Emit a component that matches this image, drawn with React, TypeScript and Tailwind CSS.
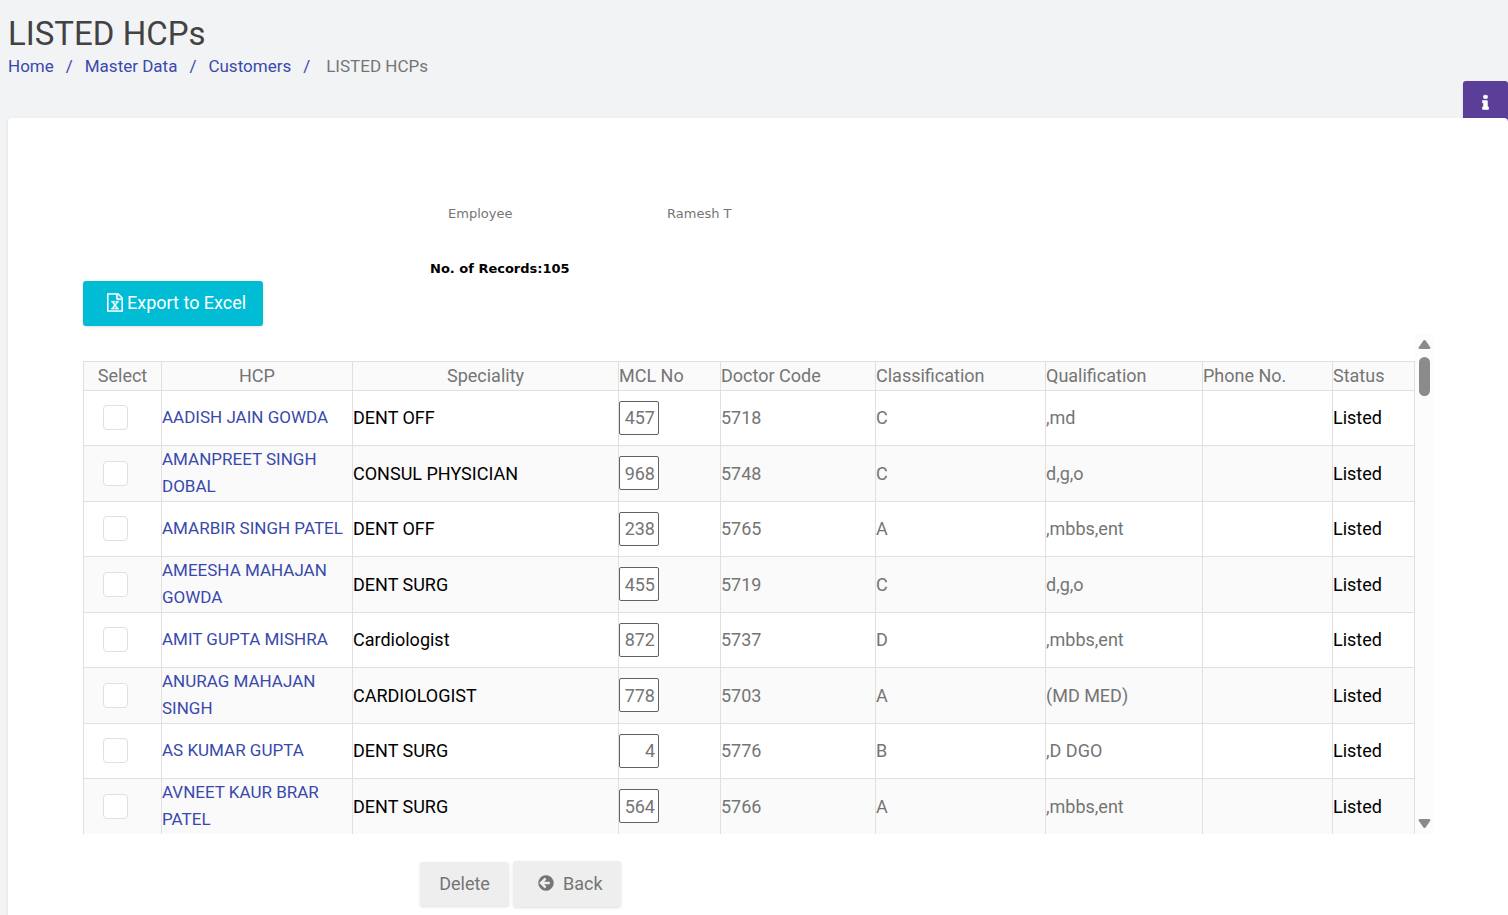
import { useState } from "react"

interface Hcp {
   name: string
   speciality: string
   mclNo: string
   code: string
   classification: string
   qualification: string
   phone: string
   status: string
}

const hcps: Hcp[] = [
   { name: "AADISH JAIN GOWDA", speciality: "DENT OFF", mclNo: "457", code: "5718", classification: "C", qualification: ",md", phone: "", status: "Listed" },
   { name: "AMANPREET SINGH DOBAL", speciality: "CONSUL PHYSICIAN", mclNo: "968", code: "5748", classification: "C", qualification: "d,g,o", phone: "", status: "Listed" },
   { name: "AMARBIR SINGH PATEL", speciality: "DENT OFF", mclNo: "238", code: "5765", classification: "A", qualification: ",mbbs,ent", phone: "", status: "Listed" },
   { name: "AMEESHA MAHAJAN GOWDA", speciality: "DENT SURG", mclNo: "455", code: "5719", classification: "C", qualification: "d,g,o", phone: "", status: "Listed" },
   { name: "AMIT GUPTA MISHRA", speciality: "Cardiologist", mclNo: "872", code: "5737", classification: "D", qualification: ",mbbs,ent", phone: "", status: "Listed" },
   { name: "ANURAG MAHAJAN SINGH", speciality: "CARDIOLOGIST", mclNo: "778", code: "5703", classification: "A", qualification: "(MD MED)", phone: "", status: "Listed" },
   { name: "AS KUMAR GUPTA", speciality: "DENT SURG", mclNo: "4", code: "5776", classification: "B", qualification: ",D DGO", phone: "", status: "Listed" },
   { name: "AVNEET KAUR BRAR PATEL", speciality: "DENT SURG", mclNo: "564", code: "5766", classification: "A", qualification: ",mbbs,ent", phone: "", status: "Listed" },
]

const crumbs = ["Home", "Master Data", "Customers"]

const InfoIcon = () => (
   <svg viewBox="0 0 640 1792" className="h-[18px] w-[7px]" fill="currentColor" stroke="currentColor" strokeWidth="60" aria-hidden="true">
      <path d="M640 1344v128q0 26-19 45t-45 19h-512q-26 0-45-19t-19-45v-128q0-26 19-45t45-19h64v-384h-64q-26 0-45-19t-19-45v-128q0-26 19-45t45-19h384q26 0 45 19t19 45v576h64q26 0 45 19t19 45zM512 192v192q0 26-19 45t-45 19h-256q-26 0-45-19t-19-45v-192q0-26 19-45t45-19h256q26 0 45 19t19 45z" />
   </svg>
)

const ExcelIcon = () => (
   <svg viewBox="0 0 1536 1792" className="h-[19px] w-4" fill="currentColor" stroke="currentColor" strokeWidth="40" aria-hidden="true">
      <path d="M1468 380q28 28 48 76t20 88v1152q0 40-28 68t-68 28h-1344q-40 0-68-28t-28-68v-1600q0-40 28-68t68-28h896q40 0 88 20t76 48zM1024 136v376h376q-10-29-22-41l-313-313q-12-12-41-22zM1408 1664v-1024h-416q-40 0-68-28t-28-68v-416h-768v1536h1280zM429 1430v106h281v-106h-75l103-161q5-7 10-16.5t7.5-13.5 3.5-4h2q1 4 5 10 2 4 4.5 7.5t6 8 6.5 8.5l107 161h-76v106h291v-106h-68l-192-273 195-282h67v-107h-279v107h74l-103 159q-4 7-10 16.5t-9 13.5l-2 3h-2q-1-4-5-10-6-11-17-23l-106-159h76v-107h-290v107h68l189 272-194 283h-68z" />
   </svg>
)

const BackIcon = () => (
   <svg viewBox="0 0 1792 1792" className="size-[18px]" fill="currentColor" aria-hidden="true">
      <path d="M1280 960v-128q0-26-19-45t-45-19h-502l189-189q19-19 19-45t-19-45l-91-91q-18-18-45-18t-45 18l-362 362-91 91q-18 18-18 45t18 45l91 91 362 362q18 18 45 18t45-18l91-91q18-18 18-45t-18-45l-189-189h502q26 0 45-19t19-45zM1664 896q0 209-103 385.5t-279.5 279.5-385.5 103-385.5-103-279.5-279.5-103-385.5 103-385.5 279.5-279.5 385.5-103 385.5 103 279.5 279.5 103 385.5z" />
   </svg>
)

const ScrollBar = () => (
   <div className="flex w-[19px] shrink-0 flex-col items-center bg-[#fcfcfc] py-[5px]" aria-hidden="true">
      <svg viewBox="0 0 13 12" className="h-3 w-[13px]" fill="#8b8b8b">
         <path d="M5.4 1.6q1.1-1.3 2.2 0l4.6 6.6q.8 1.8-1 1.8h-9.4q-1.8 0-1-1.8z" />
      </svg>
      <div className="mt-[6px] h-[39px] w-[11px] rounded-full bg-[#8b8b8b]" />
      <svg viewBox="0 0 13 12" className="mt-auto h-3 w-[13px]" fill="#8b8b8b">
         <path d="M5.4 10.4q1.1 1.3 2.2 0l4.6-6.6q.8-1.8-1-1.8h-9.4q-1.8 0-1 1.8z" />
      </svg>
   </div>
)

const HcpTable = () => {
   const [mclNos, setMclNos] = useState(hcps.map((h) => h.mclNo))

   return (
      <table className="w-full table-fixed border-collapse text-left [&_td]:border [&_td]:border-[#e0e0e0] [&_td]:p-0 [&_td]:pb-px [&_th]:border [&_th]:border-[#e0e0e0] [&_th]:p-0 [&_th]:pb-px [&_th]:font-normal">
         <colgroup>
            <col className="w-[78px]" />
            <col className="w-[191px]" />
            <col />
            <col className="w-[102px]" />
            <col className="w-[155px]" />
            <col className="w-[170px]" />
            <col className="w-[157px]" />
            <col className="w-[130px]" />
            <col className="w-[82px]" />
         </colgroup>
         <thead>
            <tr className="h-[29px] bg-[#fafafa]">
               <th className="text-center">Select</th>
               <th className="text-center">HCP</th>
               <th className="text-center">Speciality</th>
               <th>MCL No</th>
               <th>Doctor Code</th>
               <th>Classification</th>
               <th>Qualification</th>
               <th>Phone No.</th>
               <th>Status</th>
            </tr>
         </thead>
         <tbody>
            {hcps.map((h, i) => (
               <tr key={h.code} className="h-[55px] even:h-14 even:bg-[#fafafa]">
                  <td>
                     <input type="checkbox" aria-label={h.name} className="ml-[19px] block size-[25px] appearance-none rounded border border-[#e0e0e0] bg-white checked:bg-[#3f51b5]" />
                  </td>
                  <td><a href="#" className="block text-[17px] text-[#3949ab]">{h.name}</a></td>
                  <td className="text-black">{h.speciality}</td>
                  <td>
                     <input
                        type="text"
                        aria-label="MCL No"
                        value={mclNos[i]}
                        onChange={(e) => setMclNos(mclNos.map((n, j) => (j === i ? e.target.value : n)))}
                        className="block h-[34px] w-10 rounded-xs border border-[#616161] bg-white pr-[3px] text-right"
                     />
                  </td>
                  <td>{h.code}</td>
                  <td>{h.classification}</td>
                  <td>{h.qualification}</td>
                  <td>{h.phone}</td>
                  <td className="text-black">{h.status}</td>
               </tr>
            ))}
         </tbody>
      </table>
   )
}

export default function App() {
   return (
      <div className="min-h-screen bg-[#f1f3f5] pl-2 font-['Roboto',sans-serif] text-[18px] leading-[27px] text-[#757575]">
         <header className="flex flex-col pt-[14px]">
            <h1 className="text-[33px] leading-[39px] text-[#424242]">LISTED HCPs</h1>
            <nav className="flex text-[17px] text-[#3949ab]">
               {crumbs.map((c) => (
                  <div key={c} className="flex">
                     <a href="#">{c}</a>
                     <span className="px-3">/</span>
                  </div>
               ))}
               <span className="pl-1 text-[#757575]">LISTED HCPs</span>
            </nav>
            <button type="button" aria-label="Info" className="mt-px -mb-1 flex h-[41px] w-[45px] justify-center self-end rounded-t-[3px] bg-[#5a3e98] pt-[13px] text-white shadow">
               <InfoIcon />
            </button>
         </header>

         <main className="relative min-h-[797px] rounded-t bg-white pt-[82px] pr-[74px] pb-2 pl-[75px] shadow-sm">
            <div className="flex pl-[365px] font-['DejaVu_Sans',sans-serif] text-[13px]">
               <span className="w-[219px]">Employee</span>
               <span>Ramesh T</span>
            </div>
            <p className="mt-[29px] pl-[347px] font-['DejaVu_Sans',sans-serif] text-[13px] leading-[25px] font-bold text-black">No. of Records:105</p>

            <button type="button" className="flex h-[45px] w-[180px] items-center gap-1 rounded-[3px] bg-[#00bcd4] pb-0.5 pl-6 text-white shadow-sm">
               <ExcelIcon />
               Export to Excel
            </button>

            <div className="mt-2 flex h-[500px]">
               <div className="grow overflow-y-auto pt-[27px] [scrollbar-width:none]">
                  <HcpTable />
               </div>
               <ScrollBar />
            </div>

            <div className="mt-[27px] flex items-center gap-1 pl-[337px]">
               <button type="button" className="h-11 w-[89px] rounded-[3px] bg-[#eeeeee] pb-0.5 shadow">Delete</button>
               <button type="button" className="flex h-[46px] w-[108px] items-center gap-2 rounded-[3px] bg-[#eeeeee] pb-0.5 pl-6 shadow">
                  <BackIcon />
                  Back
               </button>
            </div>
         </main>
      </div>
   )
}
